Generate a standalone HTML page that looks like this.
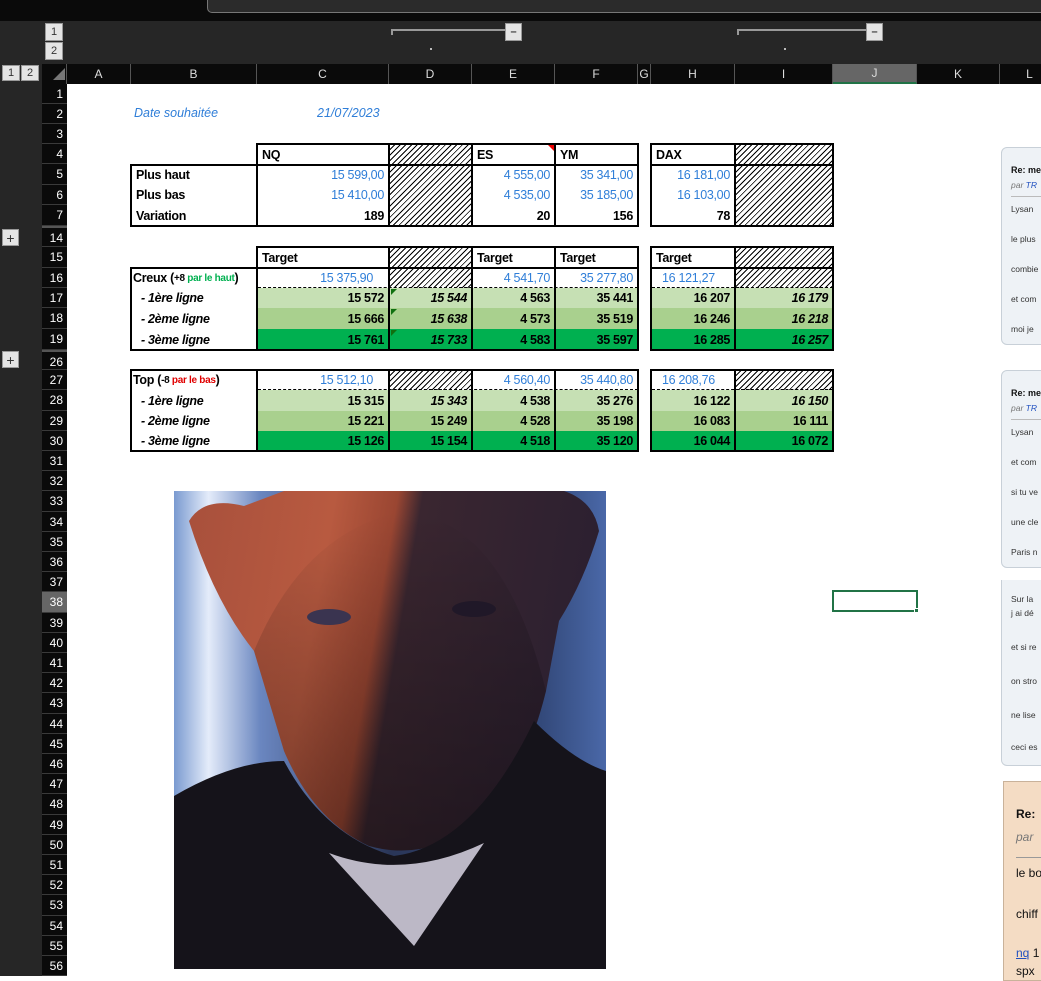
<!DOCTYPE html>
<html><head><meta charset="utf-8"><style>
*{margin:0;padding:0;box-sizing:border-box}
body{width:1041px;height:976px;overflow:hidden;background:#fff;position:relative;font-family:"Liberation Sans",sans-serif}
div{position:absolute;white-space:nowrap}
.l{background:#000}
.c{display:flex;align-items:center;padding:0 5px;font-size:12.5px;font-weight:bold;white-space:nowrap;letter-spacing:-0.3px}
.r{justify-content:flex-end}
.b{color:#2f7ed8;font-weight:normal}
.i{font-style:italic}
.h{background:repeating-linear-gradient(135deg,#000 0 1px,#fff 1px 4px)}
.ch{top:64px;height:20px;color:#ddd;font-size:12px;display:flex;align-items:center;justify-content:center;border-right:1px solid #555;background:#0a0a0a}
.btn{background:#e4e4e4;border:1px solid #999;color:#333;font-size:11px;display:flex;align-items:center;justify-content:center}
.cm{left:1001px;width:60px;background:#eef2f6;border:1px solid #c8d0d8;border-radius:6px;font-size:8.5px;color:#333}
.cm p{position:absolute;left:9px;white-space:nowrap}
#rows{left:42px;top:84px;width:25px;height:892px;background:#0a0a0a}
#rows span{position:absolute;left:0;width:25px;height:20px;line-height:20px;text-align:right;padding-right:4px;color:#fff;font-size:12px;border-bottom:1px solid #3a3a3a;background:#0a0a0a}
</style></head><body>
<div style="left:0;top:0;width:1041px;height:21px;background:#0a0a0a"></div>
<div style="left:207px;top:-5px;width:840px;height:18px;background:#2b2b2b;border:1px solid #777;border-radius:5px"></div>
<div style="left:0;top:21px;width:1041px;height:43px;background:#262626"></div>
<div class="btn" style="left:45px;top:23px;width:18px;height:18px">1</div>
<div class="btn" style="left:45px;top:42px;width:18px;height:18px">2</div>
<div style="left:391px;top:29px;width:115px;height:2px;background:#999"></div>
<div style="left:391px;top:29px;width:2px;height:6px;background:#999"></div>
<div class="btn" style="left:505px;top:23px;width:17px;height:18px;font-weight:bold">–</div>
<div style="left:430px;top:48px;width:2px;height:2px;background:#bbb"></div>
<div style="left:737px;top:29px;width:130px;height:2px;background:#999"></div>
<div style="left:737px;top:29px;width:2px;height:6px;background:#999"></div>
<div class="btn" style="left:866px;top:23px;width:17px;height:18px;font-weight:bold">–</div>
<div style="left:784px;top:48px;width:2px;height:2px;background:#bbb"></div>
<div style="left:0;top:64px;width:42px;height:912px;background:#262626"></div>
<div class="btn" style="left:2px;top:65px;width:18px;height:16px">1</div>
<div class="btn" style="left:21px;top:65px;width:18px;height:16px">2</div>
<div style="left:42px;top:64px;width:25px;height:20px;background:#0a0a0a;border-right:1px solid #555"></div>
<div style="left:53px;top:68px;width:0;height:0;border-left:12px solid transparent;border-bottom:12px solid #777"></div>
<div class="ch" style="left:67px;width:64px">A</div>
<div class="ch" style="left:131px;width:126px">B</div>
<div class="ch" style="left:257px;width:132px">C</div>
<div class="ch" style="left:389px;width:83px">D</div>
<div class="ch" style="left:472px;width:83px">E</div>
<div class="ch" style="left:555px;width:83px">F</div>
<div class="ch" style="left:638px;width:13px">G</div>
<div class="ch" style="left:651px;width:84px">H</div>
<div class="ch" style="left:735px;width:98px">I</div>
<div class="ch" style="left:833px;width:84px;background:#666;border-bottom:2px solid #217346">J</div>
<div class="ch" style="left:917px;width:83px">K</div>
<div class="ch" style="left:1000px;width:60px">L</div>
<div id="rows">
<span style="top:0">1</span><span style="top:20px">2</span><span style="top:40px">3</span><span style="top:60px">4</span><span style="top:80px;height:21px">5</span><span style="top:101px">6</span><span style="top:121px;height:21px">7</span>
<span style="top:142px;height:21px;border-top:2px solid #555">14</span><span style="top:163px;height:21px">15</span><span style="top:184px">16</span><span style="top:204px">17</span><span style="top:224px;height:21px">18</span><span style="top:245px;height:21px">19</span>
<span style="top:266px;border-top:2px solid #555">26</span><span style="top:286px">27</span><span style="top:306px;height:21px">28</span><span style="top:327px">29</span><span style="top:347px">30</span><span style="top:367px">31</span><span style="top:387px">32</span><span style="top:407px;height:21px">33</span><span style="top:428px">34</span><span style="top:448px">35</span><span style="top:468px">36</span><span style="top:488px">37</span><span style="top:508px;height:21px;background:#666">38</span><span style="top:529px">39</span><span style="top:549px">40</span><span style="top:569px">41</span><span style="top:589px">42</span><span style="top:609px;height:21px">43</span><span style="top:630px">44</span><span style="top:650px">45</span><span style="top:670px">46</span><span style="top:690px">47</span><span style="top:710px;height:21px">48</span><span style="top:731px">49</span><span style="top:751px">50</span><span style="top:771px">51</span><span style="top:791px">52</span><span style="top:811px;height:21px">53</span><span style="top:832px">54</span><span style="top:852px">55</span><span style="top:872px">56</span>
</div>
<div class="btn" style="left:2px;top:229px;width:17px;height:17px;font-size:14px">+</div>
<div class="btn" style="left:2px;top:351px;width:17px;height:17px;font-size:14px">+</div>

<div style="left:134px;top:106px;font-size:12.5px;font-style:italic;color:#2f7ed8">Date souhaitée</div>
<div style="left:317px;top:106px;font-size:12.5px;font-style:italic;color:#2f7ed8">21/07/2023</div>

<!-- TABLE 1 -->
<div class="h" style="left:389px;top:144px;width:83px;height:82px"></div>
<div class="h" style="left:735px;top:144px;width:98px;height:82px"></div>
<div class="c" style="left:257px;top:144px;width:132px;height:21px">NQ</div>
<div class="c" style="left:472px;top:144px;width:83px;height:21px">ES</div>
<div style="left:548px;top:145px;width:0;height:0;border-left:6px solid transparent;border-top:6px solid #e00"></div>
<div class="c" style="left:555px;top:144px;width:83px;height:21px">YM</div>
<div class="c" style="left:651px;top:144px;width:84px;height:21px">DAX</div>
<div class="c" style="left:131px;top:165px;width:126px;height:20px">Plus haut</div>
<div class="c" style="left:131px;top:185px;width:126px;height:20px">Plus bas</div>
<div class="c" style="left:131px;top:205px;width:126px;height:21px">Variation</div>
<div class="c r b" style="left:257px;top:165px;width:132px;height:20px">15 599,00</div>
<div class="c r b" style="left:257px;top:185px;width:132px;height:20px">15 410,00</div>
<div class="c r" style="left:257px;top:205px;width:132px;height:21px">189</div>
<div class="c r b" style="left:472px;top:165px;width:83px;height:20px">4 555,00</div>
<div class="c r b" style="left:472px;top:185px;width:83px;height:20px">4 535,00</div>
<div class="c r" style="left:472px;top:205px;width:83px;height:21px">20</div>
<div class="c r b" style="left:555px;top:165px;width:83px;height:20px">35 341,00</div>
<div class="c r b" style="left:555px;top:185px;width:83px;height:20px">35 185,00</div>
<div class="c r" style="left:555px;top:205px;width:83px;height:21px">156</div>
<div class="c r b" style="left:651px;top:165px;width:84px;height:20px">16 181,00</div>
<div class="c r b" style="left:651px;top:185px;width:84px;height:20px">16 103,00</div>
<div class="c r" style="left:651px;top:205px;width:84px;height:21px">78</div>
<div class="l" style="left:256px;top:143px;width:383px;height:2px"></div>
<div class="l" style="left:130px;top:164px;width:509px;height:2px"></div>
<div class="l" style="left:130px;top:225px;width:509px;height:2px"></div>
<div class="l" style="left:130px;top:164px;width:2px;height:63px"></div>
<div class="l" style="left:256px;top:143px;width:2px;height:84px"></div>
<div class="l" style="left:388px;top:143px;width:2px;height:84px"></div>
<div class="l" style="left:471px;top:143px;width:2px;height:84px"></div>
<div class="l" style="left:554px;top:143px;width:2px;height:84px"></div>
<div class="l" style="left:637px;top:143px;width:2px;height:84px"></div>
<div class="l" style="left:650px;top:143px;width:184px;height:2px"></div>
<div class="l" style="left:650px;top:164px;width:184px;height:2px"></div>
<div class="l" style="left:650px;top:225px;width:184px;height:2px"></div>
<div class="l" style="left:650px;top:143px;width:2px;height:84px"></div>
<div class="l" style="left:734px;top:143px;width:2px;height:84px"></div>
<div class="l" style="left:832px;top:143px;width:2px;height:84px"></div>

<!-- TABLE 2 -->
<div class="h" style="left:389px;top:247px;width:83px;height:41px"></div>
<div class="h" style="left:735px;top:247px;width:98px;height:41px"></div>
<div style="left:257px;top:288px;width:381px;height:20px;background:#c6e0b4"></div>
<div style="left:257px;top:308px;width:381px;height:21px;background:#a9d08e"></div>
<div style="left:257px;top:329px;width:381px;height:21px;background:#00b050"></div>
<div style="left:651px;top:288px;width:182px;height:20px;background:#c6e0b4"></div>
<div style="left:651px;top:308px;width:182px;height:21px;background:#a9d08e"></div>
<div style="left:651px;top:329px;width:182px;height:21px;background:#00b050"></div>
<div class="c" style="left:257px;top:247px;width:132px;height:21px">Target</div>
<div class="c" style="left:472px;top:247px;width:83px;height:21px">Target</div>
<div class="c" style="left:555px;top:247px;width:83px;height:21px">Target</div>
<div class="c" style="left:651px;top:247px;width:84px;height:21px">Target</div>
<div class="c" style="left:131px;top:268px;width:126px;height:20px;padding-left:2px">Creux (<span style="font-size:10px">+8 </span><span style="font-size:10px;color:#00b050">&nbsp;par le haut</span>)</div>
<div class="c r b" style="left:257px;top:268px;width:132px;height:20px;padding-right:16px">15 375,90</div>
<div class="c r b" style="left:472px;top:268px;width:83px;height:20px">4 541,70</div>
<div class="c r b" style="left:555px;top:268px;width:83px;height:20px">35 277,80</div>
<div class="c r b" style="left:651px;top:268px;width:84px;height:20px;justify-content:flex-start;padding-left:11px">16 121,27</div>
<div class="c i" style="left:131px;top:288px;width:126px;height:20px;padding-left:10px">- 1ère ligne</div>
<div class="c i" style="left:131px;top:308px;width:126px;height:21px;padding-left:10px">- 2ème ligne</div>
<div class="c i" style="left:131px;top:329px;width:126px;height:21px;padding-left:10px">- 3ème ligne</div>
<div class="c r" style="left:257px;top:288px;width:132px;height:20px">15 572</div>
<div class="c r" style="left:257px;top:308px;width:132px;height:21px">15 666</div>
<div class="c r" style="left:257px;top:329px;width:132px;height:21px">15 761</div>
<div class="c r i" style="left:389px;top:288px;width:83px;height:20px">15 544</div>
<div class="c r i" style="left:389px;top:308px;width:83px;height:21px">15 638</div>
<div class="c r i" style="left:389px;top:329px;width:83px;height:21px">15 733</div>
<div style="left:391px;top:289px;border-right:6px solid transparent;border-top:6px solid #107010"></div>
<div style="left:391px;top:309px;border-right:6px solid transparent;border-top:6px solid #107010"></div>
<div style="left:391px;top:330px;border-right:6px solid transparent;border-top:6px solid #107010"></div>
<div class="c r" style="left:472px;top:288px;width:83px;height:20px">4 563</div>
<div class="c r" style="left:472px;top:308px;width:83px;height:21px">4 573</div>
<div class="c r" style="left:472px;top:329px;width:83px;height:21px">4 583</div>
<div class="c r" style="left:555px;top:288px;width:83px;height:20px">35 441</div>
<div class="c r" style="left:555px;top:308px;width:83px;height:21px">35 519</div>
<div class="c r" style="left:555px;top:329px;width:83px;height:21px">35 597</div>
<div class="c r" style="left:651px;top:288px;width:84px;height:20px">16 207</div>
<div class="c r" style="left:651px;top:308px;width:84px;height:21px">16 246</div>
<div class="c r" style="left:651px;top:329px;width:84px;height:21px">16 285</div>
<div class="c r i" style="left:735px;top:288px;width:98px;height:20px">16 179</div>
<div class="c r i" style="left:735px;top:308px;width:98px;height:21px">16 218</div>
<div class="c r i" style="left:735px;top:329px;width:98px;height:21px">16 257</div>
<div style="left:258px;top:287px;width:380px;border-top:1px dashed #000"></div>
<div style="left:652px;top:287px;width:181px;border-top:1px dashed #000"></div>
<div class="l" style="left:256px;top:246px;width:383px;height:2px"></div>
<div class="l" style="left:130px;top:267px;width:509px;height:2px"></div>
<div class="l" style="left:130px;top:349px;width:509px;height:2px"></div>
<div class="l" style="left:130px;top:267px;width:2px;height:84px"></div>
<div class="l" style="left:256px;top:246px;width:2px;height:105px"></div>
<div class="l" style="left:388px;top:246px;width:2px;height:105px"></div>
<div class="l" style="left:471px;top:246px;width:2px;height:105px"></div>
<div class="l" style="left:554px;top:246px;width:2px;height:105px"></div>
<div class="l" style="left:637px;top:246px;width:2px;height:105px"></div>
<div class="l" style="left:650px;top:246px;width:184px;height:2px"></div>
<div class="l" style="left:650px;top:267px;width:184px;height:2px"></div>
<div class="l" style="left:650px;top:349px;width:184px;height:2px"></div>
<div class="l" style="left:650px;top:246px;width:2px;height:105px"></div>
<div class="l" style="left:734px;top:246px;width:2px;height:105px"></div>
<div class="l" style="left:832px;top:246px;width:2px;height:105px"></div>

<!-- TABLE 3 -->
<div class="h" style="left:389px;top:370px;width:83px;height:20px"></div>
<div class="h" style="left:735px;top:370px;width:98px;height:20px"></div>
<div style="left:257px;top:390px;width:381px;height:21px;background:#c6e0b4"></div>
<div style="left:257px;top:411px;width:381px;height:20px;background:#a9d08e"></div>
<div style="left:257px;top:431px;width:381px;height:20px;background:#00b050"></div>
<div style="left:651px;top:390px;width:182px;height:21px;background:#c6e0b4"></div>
<div style="left:651px;top:411px;width:182px;height:20px;background:#a9d08e"></div>
<div style="left:651px;top:431px;width:182px;height:20px;background:#00b050"></div>
<div class="c" style="left:131px;top:370px;width:126px;height:20px;padding-left:2px">Top (<span style="font-size:10px">-8 </span><span style="font-size:10px;color:#e00000">&nbsp;par le bas</span>)</div>
<div class="c r b" style="left:257px;top:370px;width:132px;height:20px;padding-right:16px">15 512,10</div>
<div class="c r b" style="left:472px;top:370px;width:83px;height:20px">4 560,40</div>
<div class="c r b" style="left:555px;top:370px;width:83px;height:20px">35 440,80</div>
<div class="c r b" style="left:651px;top:370px;width:84px;height:20px;justify-content:flex-start;padding-left:11px">16 208,76</div>
<div class="c i" style="left:131px;top:390px;width:126px;height:21px;padding-left:10px">- 1ère ligne</div>
<div class="c i" style="left:131px;top:411px;width:126px;height:20px;padding-left:10px">- 2ème ligne</div>
<div class="c i" style="left:131px;top:431px;width:126px;height:20px;padding-left:10px">- 3ème ligne</div>
<div class="c r" style="left:257px;top:390px;width:132px;height:21px">15 315</div>
<div class="c r" style="left:257px;top:411px;width:132px;height:20px">15 221</div>
<div class="c r" style="left:257px;top:431px;width:132px;height:20px">15 126</div>
<div class="c r i" style="left:389px;top:390px;width:83px;height:21px">15 343</div>
<div class="c r" style="left:389px;top:411px;width:83px;height:20px">15 249</div>
<div class="c r" style="left:389px;top:431px;width:83px;height:20px">15 154</div>
<div class="c r" style="left:472px;top:390px;width:83px;height:21px">4 538</div>
<div class="c r" style="left:472px;top:411px;width:83px;height:20px">4 528</div>
<div class="c r" style="left:472px;top:431px;width:83px;height:20px">4 518</div>
<div class="c r" style="left:555px;top:390px;width:83px;height:21px">35 276</div>
<div class="c r" style="left:555px;top:411px;width:83px;height:20px">35 198</div>
<div class="c r" style="left:555px;top:431px;width:83px;height:20px">35 120</div>
<div class="c r" style="left:651px;top:390px;width:84px;height:21px">16 122</div>
<div class="c r" style="left:651px;top:411px;width:84px;height:20px">16 083</div>
<div class="c r" style="left:651px;top:431px;width:84px;height:20px">16 044</div>
<div class="c r i" style="left:735px;top:390px;width:98px;height:21px">16 150</div>
<div class="c r" style="left:735px;top:411px;width:98px;height:20px">16 111</div>
<div class="c r" style="left:735px;top:431px;width:98px;height:20px">16 072</div>
<div style="left:258px;top:389px;width:380px;border-top:1px dashed #000"></div>
<div style="left:652px;top:389px;width:181px;border-top:1px dashed #000"></div>
<div class="l" style="left:130px;top:369px;width:509px;height:2px"></div>
<div class="l" style="left:130px;top:450px;width:509px;height:2px"></div>
<div class="l" style="left:130px;top:369px;width:2px;height:83px"></div>
<div class="l" style="left:256px;top:369px;width:2px;height:83px"></div>
<div class="l" style="left:388px;top:369px;width:2px;height:83px"></div>
<div class="l" style="left:471px;top:369px;width:2px;height:83px"></div>
<div class="l" style="left:554px;top:369px;width:2px;height:83px"></div>
<div class="l" style="left:637px;top:369px;width:2px;height:83px"></div>
<div class="l" style="left:650px;top:369px;width:184px;height:2px"></div>
<div class="l" style="left:650px;top:450px;width:184px;height:2px"></div>
<div class="l" style="left:650px;top:369px;width:2px;height:83px"></div>
<div class="l" style="left:734px;top:369px;width:2px;height:83px"></div>
<div class="l" style="left:832px;top:369px;width:2px;height:83px"></div>

<div style="left:832px;top:590px;width:86px;height:22px;border:2px solid #217346"></div>
<div style="left:914px;top:608px;width:5px;height:5px;background:#217346;border:1px solid #fff"></div>

<svg style="position:absolute;left:174px;top:491px" width="432" height="478" viewBox="0 0 432 478">
<defs>
<linearGradient id="bg" x1="0" y1="0" x2="1" y2="0"><stop offset="0" stop-color="#7a9ad0"/><stop offset="0.08" stop-color="#e4ecfa"/><stop offset="0.2" stop-color="#6a86c0"/><stop offset="0.5" stop-color="#2a3658"/><stop offset="0.85" stop-color="#33497a"/><stop offset="1" stop-color="#4a68a8"/></linearGradient>
<linearGradient id="face" x1="0" y1="0" x2="1" y2="0.15"><stop offset="0" stop-color="#a8503c"/><stop offset="0.35" stop-color="#b85a40"/><stop offset="0.5" stop-color="#9a4632"/><stop offset="0.56" stop-color="#3a2630"/><stop offset="1" stop-color="#2c2030"/></linearGradient>
<linearGradient id="vg" x1="0" y1="0" x2="0" y2="1"><stop offset="0" stop-color="#000" stop-opacity="0"/><stop offset="1" stop-color="#000" stop-opacity="0.35"/></linearGradient>
</defs>
<rect width="432" height="478" fill="url(#bg)"/>
<path d="M15 30 Q30 5 70 15 L110 0 L390 0 Q420 10 425 40 Q410 90 385 130 L372 200 Q350 290 300 335 Q250 370 195 355 Q140 330 110 260 L80 160 Q40 110 15 30Z" fill="url(#face)"/>
<path d="M80 160 Q130 40 230 20 Q330 30 372 200 Q350 290 300 335 Q250 370 195 355 Q140 330 110 260Z" fill="url(#vg)"/>
<ellipse cx="155" cy="126" rx="22" ry="8" fill="#3a3450"/>
<ellipse cx="300" cy="118" rx="22" ry="8" fill="#201828"/>
<path d="M0 305 Q60 270 110 270 Q150 345 220 365 Q300 355 360 230 Q400 270 432 280 L432 478 L0 478Z" fill="#15131a"/>
<path d="M155 362 Q230 390 310 352 L240 455 Z" fill="#bcb8c6"/>
</svg>

<div class="cm" style="top:147px;height:198px"><p style="top:17px;font-weight:bold;font-size:9px;color:#111">Re: me</p><p style="top:32px;font-style:italic;color:#777">par <span style="color:#2050c0">TR</span></p><div style="left:9px;top:48px;width:60px;border-top:1px solid #bbb"></div><p style="top:56px">Lysan</p><p style="top:86px">le plus</p><p style="top:116px">combie</p><p style="top:146px">et com</p><p style="top:176px">moi je</p></div>
<div class="cm" style="top:370px;height:198px"><p style="top:17px;font-weight:bold;font-size:9px;color:#111">Re: me</p><p style="top:32px;font-style:italic;color:#777">par <span style="color:#2050c0">TR</span></p><div style="left:9px;top:48px;width:60px;border-top:1px solid #bbb"></div><p style="top:56px">Lysan</p><p style="top:86px">et com</p><p style="top:116px">si tu ve</p><p style="top:146px">une cle</p><p style="top:176px">Paris n</p></div>
<div class="cm" style="top:580px;height:186px;border-top:none;border-radius:0 0 6px 6px"><p style="top:14px">Sur la</p><p style="top:28px">j ai dé</p><p style="top:62px">et si re</p><p style="top:96px">on stro</p><p style="top:130px">ne lise</p><p style="top:162px">ceci es</p></div>
<div style="left:1003px;top:781px;width:60px;height:200px;background:#f4dcc4;border:1px solid #c9b29a"></div>
<div style="left:1016px;top:807px;font-size:12px;font-weight:bold;color:#111">Re:</div>
<div style="left:1016px;top:830px;font-size:12px;font-style:italic;color:#777">par</div>
<div style="left:1016px;top:857px;width:30px;border-top:1px solid #999"></div>
<div style="left:1016px;top:866px;font-size:12px;color:#111">le bo</div>
<div style="left:1016px;top:907px;font-size:12px;color:#111">chiff</div>
<div style="left:1016px;top:946px;font-size:12px;color:#111"><span style="color:#2050c0;text-decoration:underline">nq</span> 1</div>
<div style="left:1016px;top:964px;font-size:12px;color:#111">spx</div>
</body></html>
